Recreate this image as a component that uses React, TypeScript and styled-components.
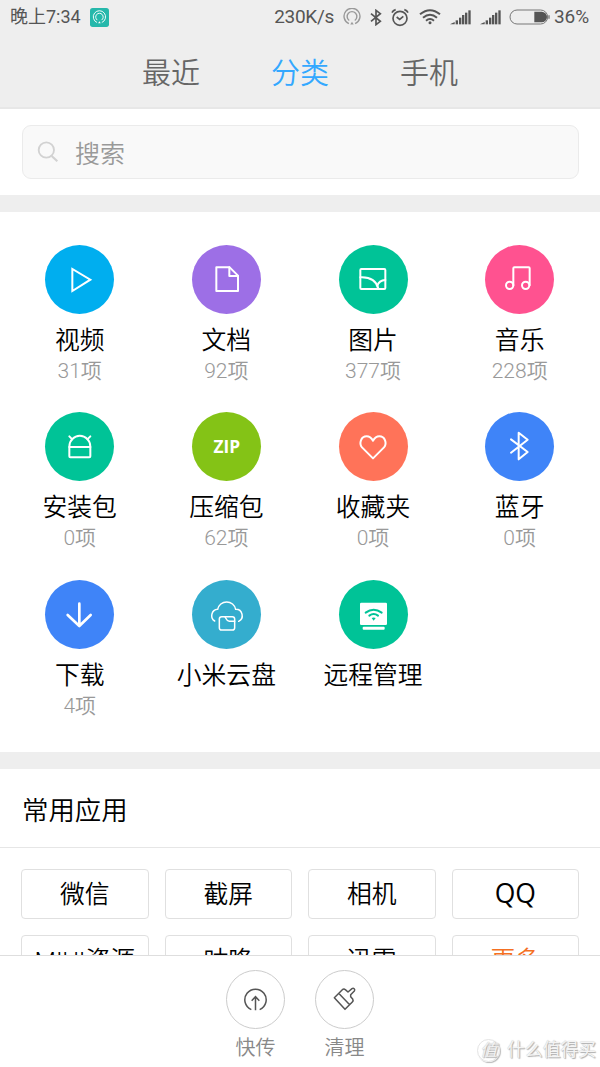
import React from 'react';
import styled, { createGlobalStyle } from 'styled-components';

const GlobalStyle = createGlobalStyle`
  * { box-sizing: border-box; }
  body {
    margin: 0;
    background: #fff;
    font-family: Roboto, "Noto Sans CJK SC", sans-serif;
    font-weight: 350;
    overflow: hidden;
  }
`;

const Screen = styled.div`
  display: flex;
  flex-direction: column;
  width: 600px;
  height: 1067px;
  overflow: hidden;
  background: #fff;
`;

const Header = styled.header`
  flex: none;
  height: 109px;
  background: #eee;
  border-bottom: 2px solid #e7e7e7;
`;

const StatusBar = styled.div`
  display: flex;
  align-items: center;
  height: 34px;
  padding: 0 10px 0 10px;
  color: #555;
  font-size: 19px;
  font-weight: 400;
`;

const Clock = styled.span`
  width: 80px;
  font-size: 18px;
  line-height: 20px;
  white-space: nowrap;
`;

const StatusRight = styled.div`
  display: flex;
  align-items: center;
  margin-left: auto;
`;

const Speed = styled.span`
  padding-bottom: 1px;
  letter-spacing: -0.3px;
`;

const StatusIcon = styled.svg<{ $gap: number }>`
  display: block;
  flex: none;
  margin-left: ${(p) => p.$gap}px;
`;

const Battery = styled.span`
  margin-left: 4px;
  padding-bottom: 1px;
  width: 36px;
  white-space: nowrap;
  letter-spacing: -0.1px;
`;

const Tabs = styled.nav`
  display: flex;
  justify-content: center;
  gap: 71px;
  height: 73px;
  line-height: 81px;
  font-size: 29px;
`;

const Tab = styled.span<{ $active?: boolean }>`
  color: ${(p) => (p.$active ? '#33a8ff' : '#666')};
`;

const SearchPanel = styled.div`
  flex: none;
  height: 86px;
  padding: 16px 21.5px 0;
`;

const SearchBox = styled.div`
  display: flex;
  align-items: center;
  gap: 16px;
  height: 54px;
  padding-left: 14.5px;
  border: 1px solid #ebebeb;
  border-radius: 9px;
  background: #f9f9f9;
  color: #999;
  font-size: 25px;
`;

const Band = styled.div`
  flex: none;
  height: 17px;
  background: #eee;
`;

const Grid = styled.section`
  flex: none;
  display: grid;
  grid-template-columns: repeat(4, 1fr);
  grid-auto-rows: 167.3px;
  height: 540px;
  padding: 33px 7px 0 6.4px;
`;

const Cell = styled.div`
  display: flex;
  flex-direction: column;
  align-items: center;
`;

const Disc = styled.div<{ $color: string }>`
  display: flex;
  align-items: center;
  justify-content: center;
  flex: none;
  width: 69px;
  height: 69px;
  border-radius: 50%;
  background: ${(p) => p.$color};
  color: #fff;
`;

const Zip = styled.span`
  padding-left: 1px;
  font: 700 17.3px/1 "Open Sans", sans-serif;
`;

const Label = styled.div`
  margin-top: 10px;
  height: 33px;
  line-height: 34px;
  font-size: 24.8px;
  color: #000;
  white-space: nowrap;
`;

const Count = styled.div`
  height: 28px;
  line-height: 28px;
  font-size: 21px;
  color: #999;
`;

const SectionTitle = styled.h2`
  flex: none;
  margin: 0;
  height: 79px;
  padding-left: 22px;
  border-bottom: 1px solid #e6e6e6;
  line-height: 84px;
  font-size: 26.4px;
  font-weight: 350;
  color: #000;
`;

const Apps = styled.section`
  flex: 1;
  min-height: 0;
  overflow: hidden;
  display: grid;
  grid-template-columns: repeat(4, 1fr);
  grid-auto-rows: 50px;
  gap: 16px;
  padding: 21px 21px 0;
`;

const AppButton = styled.div<{ $accent?: boolean; $latin?: boolean }>`
  border: 1px solid #e0e0e0;
  border-radius: 4px;
  line-height: ${(p) => (p.$latin ? 47 : 50)}px;
  height: 50px;
  text-align: center;
  font-size: ${(p) => (p.$latin ? 26.5 : 24.8)}px;
  ${(p) => p.$latin && 'font-family: "Open Sans", sans-serif; font-weight: 400;'}
  white-space: nowrap;
  color: ${(p) => (p.$accent ? '#f47023' : '#000')};
`;

const Footer = styled.footer`
  position: relative;
  flex: none;
  display: flex;
  justify-content: center;
  gap: 30px;
  height: 112px;
  padding-top: 14px;
  border-top: 1px solid #dedede;
  background: #fff;
`;

const Action = styled.div`
  display: flex;
  flex-direction: column;
  align-items: center;
  width: 59px;
  font-size: 20px;
  line-height: 38px;
  color: #888;
`;

const Ring = styled.div`
  width: 59px;
  height: 59px;
  flex: none;
  border: 1px solid #ccc;
  border-radius: 50%;
`;

const Watermark = styled.div`
  position: absolute;
  right: 4px;
  bottom: 4px;
  display: flex;
  align-items: center;
  gap: 7px;
  color: #f4f4f4;
  font-size: 17.8px;
  font-weight: 400;
  line-height: 26px;
  text-shadow: 1px 1px 1px #aaa, 0 0 1px #bbb;
`;

const Seal = styled.span`
  width: 23px;
  height: 23px;
  border-radius: 50%;
  border: 1px solid #e4e4e4;
  box-shadow: 1px 1px 1px #bbb;
  line-height: 20px;
  text-align: center;
  font-size: 17px;
  font-style: italic;
`;

/* Disc glyphs share a 207-unit square that spans the whole disc. */
const Glyph = ({ w = 6, children }: { w?: number; children: React.ReactNode }) => (
  <svg width="69" height="69" viewBox="0 0 207 207" fill="none" stroke="#fff" strokeWidth={w} strokeLinejoin="round" strokeLinecap="round">
    {children}
  </svg>
);

const Hotspot = () => (
  <>
    <path d="M17 45A23 23 0 1 1 35 45" />
    <path d="M18 36A14 14 0 1 1 34 36" />
    <path d="M21 48L26 40L31 48Z" fill="currentColor" stroke="none" />
  </>
);

const Signal = ({ gap }: { gap: number }) => (
  <StatusIcon $gap={gap} width="21" height="15" viewBox="0 0 63 45" fill="#555">
    <path d="M0 43L14 36V43Z" />
    <rect x="17" y="31" width="7" height="12" />
    <rect x="27" y="23" width="7" height="20" />
    <rect x="36" y="15" width="7" height="28" />
    <rect x="45" y="8" width="7" height="35" />
    <rect x="55" y="1" width="7" height="42" />
  </StatusIcon>
);

type Item = { name: string; count?: string; color: string; icon: React.ReactNode };

const items: Item[] = [
  { name: '视频', count: '31项', color: '#00aeef', icon: <Glyph><path d="M82 72V138L136 104Z" strokeLinejoin="miter" /></Glyph> },
  { name: '文档', count: '92项', color: '#9d6fe6', icon: <Glyph><path d="M73 67H113L138 92V138H73Z" /><path d="M112 67V93H138" /></Glyph> },
  {
    name: '图片', count: '377项', color: '#00c397',
    icon: <Glyph><rect x="64" y="72" width="75" height="60" rx="3" /><path d="M64 97Q109 95 118 131" /><path d="M139 105Q120 106 115 122" /></Glyph>,
  },
  {
    name: '音乐', count: '228项', color: '#ff5290',
    icon: <Glyph><circle cx="74" cy="121" r="11" /><circle cx="122" cy="121" r="11" /><path d="M85 121V70Q85 67 88 67H131Q134 67 134 70V121" /></Glyph>,
  },
  {
    name: '安装包', count: '0项', color: '#00c397',
    icon: <Glyph><path d="M73 104A31.5 33 0 0 1 136 104V133Q136 136 133 136H76Q73 136 73 133Z" /><path d="M73 105H136M73 73L82 82M136 73L127 82" /></Glyph>,
  },
  { name: '压缩包', count: '62项', color: '#84c316', icon: <Zip>ZIP</Zip> },
  {
    name: '收藏夹', count: '0项', color: '#ff7359',
    icon: <Glyph><path d="M102 139L69 106C59 94 66 73 83 73C93 73 98 79 102 86C106 79 111 73 121 73C138 73 145 94 135 106Z" /></Glyph>,
  },
  { name: '蓝牙', count: '0项', color: '#3f84f8', icon: <Glyph><path d="M78 82L128 120L101 142V62L128 83L78 122" /></Glyph> },
  { name: '下载', count: '4项', color: '#3f84f8', icon: <Glyph w={8}><path d="M103 71V137M68 105L103 138L137 105" /></Glyph> },
  {
    name: '小米云盘', color: '#34adce',
    icon: (
      <Glyph w={4.5}>
        <path d="M68 123A19 19 0 0 1 77 88A27.5 27.5 0 0 1 131 88A19 19 0 0 1 140 124" />
        <rect x="82" y="110" width="46" height="40" rx="7" />
        <path d="M99 111C103 114 102 123 112 124H128" />
      </Glyph>
    ),
  },
  {
    name: '远程管理', color: '#00c397',
    icon: (
      <Glyph>
        <rect x="63" y="68" width="81" height="67" rx="4" fill="#fff" stroke="none" />
        <rect x="71" y="140" width="66" height="9" rx="3" fill="#fff" stroke="none" />
        <path d="M80 98Q104 80 128 98M91 107Q104 97 117 107" stroke="#00c397" strokeWidth="6" />
        <path d="M98 114Q104 111 110 114L104 122Z" fill="#00c397" stroke="none" />
      </Glyph>
    ),
  },
];

const apps = ['微信', '截屏', '相机', 'QQ', 'MIUI资源', '咕咚', '迅雷', '更多'];

export default function App() {
  return (
    <Screen>
      <GlobalStyle />
      <Header>
        <StatusBar>
          <Clock>晚上7:34</Clock>
          <StatusIcon $gap={0} width="19" height="19" viewBox="0 0 57 57" fill="none" stroke="#fff" color="#fff" strokeWidth="3.5">
            <rect width="57" height="57" rx="8" fill="#26b8ab" stroke="none" />
            <g transform="translate(7.5 7.5) scale(.8)"><Hotspot /></g>
          </StatusIcon>
          <StatusRight>
            <Speed>230K/s</Speed>
            <StatusIcon $gap={9} width="18" height="18" viewBox="0 0 52 52" fill="none" stroke="#999" color="#999" strokeWidth="4">
              <Hotspot />
            </StatusIcon>
            <StatusIcon $gap={9} width="12" height="17" viewBox="0 0 36 51" fill="none" stroke="#555" strokeWidth="5">
              <path d="M3 14L31 37L18 47V4L31 14L3 37" />
            </StatusIcon>
            <StatusIcon $gap={9} width="18" height="19" viewBox="0 0 54 57" fill="none" stroke="#555" strokeWidth="5">
              <circle cx="27" cy="31" r="21" />
              <path d="M17 27L26 34L37 25M3 14Q6 7 14 5M51 14Q48 7 40 5" />
            </StatusIcon>
            <StatusIcon $gap={10} width="22" height="16" viewBox="0 0 66 48" fill="none" stroke="#555" strokeWidth="6">
              <path d="M3 16Q33 -9 63 16M12 26Q33 8 54 26M21 35Q33 25 45 35" />
              <circle cx="33" cy="41" r="4.5" fill="#555" stroke="none" />
            </StatusIcon>
            <Signal gap={9} />
            <Signal gap={9} />
            <StatusIcon $gap={8} width="41" height="16" viewBox="0 0 123 48" fill="none" stroke="#777" strokeWidth="3">
              <rect x="3" y="3" width="113" height="42" rx="21" />
              <path d="M76 8H98A16 16 0 0 1 98 40H76Z" fill="#555" stroke="none" />
              <path d="M120 19V29" strokeWidth="4" />
            </StatusIcon>
            <Battery>36%</Battery>
          </StatusRight>
        </StatusBar>
        <Tabs>
          <Tab>最近</Tab>
          <Tab $active>分类</Tab>
          <Tab>手机</Tab>
        </Tabs>
      </Header>
      <SearchPanel>
        <SearchBox>
          <svg width="22" height="22" viewBox="0 0 66 66" fill="none" stroke="#d2d2d2" strokeWidth="5.5">
            <circle cx="28" cy="27" r="23" />
            <path d="M44 45L61 61" strokeWidth="6.5" />
          </svg>
          <span>搜索</span>
        </SearchBox>
      </SearchPanel>
      <Band />
      <Grid>
        {items.map((it) => (
          <Cell key={it.name}>
            <Disc $color={it.color}>{it.icon}</Disc>
            <Label>{it.name}</Label>
            {it.count && <Count>{it.count}</Count>}
          </Cell>
        ))}
      </Grid>
      <Band />
      <SectionTitle>常用应用</SectionTitle>
      <Apps>
        {apps.map((name) => (
          <AppButton key={name} $accent={name === '更多'} $latin={name === 'QQ'}>{name}</AppButton>
        ))}
      </Apps>
      <Footer>
        <Action>
          <Ring>
            <svg width="57" height="57" viewBox="1 2 171 171" fill="none" stroke="#555" strokeWidth="4.5">
              <path d="M74 118A32 32 0 1 1 99 118M86.5 80V120M75 91L86.5 79L98 91" />
            </svg>
          </Ring>
          快传
        </Action>
        <Action>
          <Ring>
            <svg width="57" height="57" viewBox="1 2 171 171" fill="none" stroke="#555" strokeWidth="4.5" strokeLinejoin="round">
              <path d="M56 82L80 58Q85 54 89 58L97 65L109 55A5 5 0 0 1 116 62L105 73V79L111 86Q114 91 110 95L88 117ZM69 69L102 103" />
            </svg>
          </Ring>
          清理
        </Action>
        <Watermark>
          <Seal>值</Seal>
          <span>什么值得买</span>
        </Watermark>
      </Footer>
    </Screen>
  );
}
